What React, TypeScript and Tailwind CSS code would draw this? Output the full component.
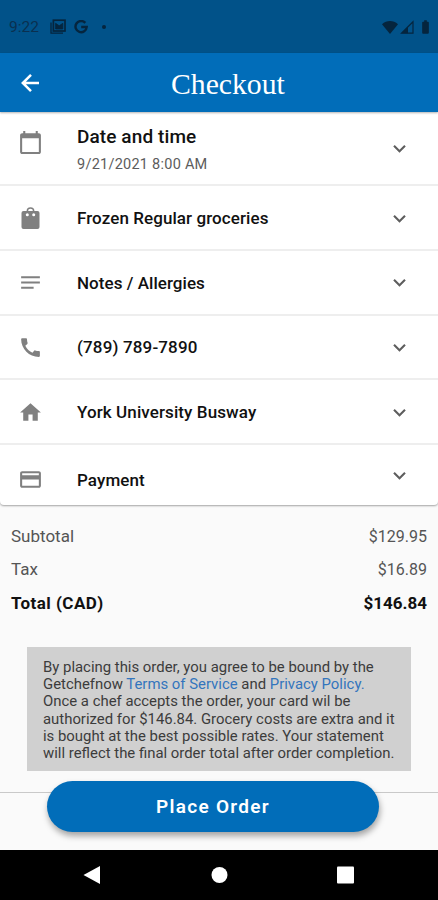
import {
    MdBatteryFull, MdCalendarToday, MdCall, MdExpandMore,
    MdHome, MdNotes, MdOutlineCreditCard,
} from "react-icons/md";

const sections = [
    { icon: MdNotes, name: "Notes / Allergies", spacing: "tracking-[0.05px]" },
    { icon: MdCall, name: "(789) 789-7890", spacing: "tracking-[0.15px]" },
    { icon: MdHome, name: "York University Busway", spacing: "tracking-[0.1px]" },
];

function StatusBar() {
    return (
        <div className="flex h-[53px] items-center bg-[#015289] pt-px pr-[7px] pl-[9px] text-[#05253e]">
            <span className="w-[41px] pt-px text-[15.5px] text-[#0a3050]">9:22</span>
            <svg width="16" height="16" viewBox="0 0 16 16" fill="none" stroke="currentColor">
                <path d="M1 3.5v10.7h12" strokeWidth="1.3" />
                <rect x="3.4" y="1.2" width="11.6" height="10.8" strokeWidth="1.7" />
                <path d="M5.6 10V4.3l3.6 2.5 3.6-2.5V10z" fill="currentColor" strokeWidth="0.8" />
            </svg>
            <svg className="ml-2" width="14" height="14" viewBox="0 0 14 14" fill="none" stroke="currentColor" strokeWidth="2.4">
                <path d="M11.3 2.9A5.6 5.6 0 1 0 12.7 7H7.2" />
            </svg>
            <span className="ml-[14px] size-1 rounded-full bg-current" />
            <svg className="ml-auto" width="16" height="13" viewBox="0 0 16 13" fill="currentColor">
                <path d="M0 3.2C4.6-1 11.4-1 16 3.2L8 13z" />
            </svg>
            <svg className="ml-[2px]" width="14" height="14" viewBox="0 0 14 14" fill="none" stroke="currentColor">
                <path d="M1.5 13.2 13 1.8v11.4z" strokeWidth="1.2" />
                <path d="M1.5 13.2 8 6.7v6.5z" fill="currentColor" stroke="none" />
            </svg>
            <MdBatteryFull className="ml-[3px] h-4 w-[17px] -mr-[3px]" />
        </div>
    );
}

function BagIcon() {
    return (
        <svg className="size-[25px] text-[#808080]" viewBox="0 0 25 25" fill="currentColor">
            <path d="M9.3 6V5.2a3.2 3.2 0 0 1 6.400 0V6" fill="none" stroke="currentColor" strokeWidth="1.500" />
            <rect x="3.500" y="5" width="18" height="18" rx="2" />
            <circle cx="9.300" cy="8.800" r="1.500" fill="white" />
            <circle cx="15.700" cy="8.800" r="1.500" fill="white" />
        </svg>
    );
}

export default function App() {
    return (
        <div className="flex h-[900px] w-[438px] flex-col overflow-hidden bg-[#fafafa] font-[Roboto,sans-serif] text-[#111]">
            <StatusBar />
            <header className="relative z-10 flex h-[59px] items-center bg-[#016db9] text-white shadow-[0_1px_2px_rgba(0,0,0,0.3)]">
                <svg className="ml-[17px] size-[26px]" viewBox="0 0 26 26" fill="none" stroke="currentColor" strokeWidth="2.500">
                    <path d="M22 13H6M14 4.800 5.800 13l8.200 8.200" />
                </svg>
                <h1 className="ml-[128px] pt-0.5 font-['Liberation_Serif',serif] text-[29.7px] leading-8">Checkout</h1>
            </header>

            <main className="overflow-hidden rounded-b bg-white shadow-[0_1px_2px_rgba(0,0,0,0.35)]">
                <div className="flex h-[74px] border-b-2 border-[#eeeeee] pr-[26px] pl-[18px]">
                    <MdCalendarToday className="mt-[18px] size-[25px] text-[#808080]" />
                    <div className="ml-[34px] flex-1 pt-[13px]">
                        <div className="text-[19px] leading-6 font-medium tracking-[0.1px]">Date and time</div>
                        <div className="mt-[6px] text-[14.5px] leading-5 tracking-[0.25px] text-[#5c5c5c]">9/21/2021 8:00 AM</div>
                    </div>
                    <MdExpandMore className="mt-6 size-[25px] text-[#5f5f5f]" />
                </div>
                <div className="flex h-[65px] items-center border-b-2 border-[#eeeeee] pt-px pr-[26px] pl-[18px]">
                    <BagIcon />
                    <div className="ml-[34px] flex-1 pt-px text-[17px] font-medium tracking-[0.08px]">Frozen Regular groceries</div>
                    <MdExpandMore className="size-[25px] text-[#5f5f5f]" />
                </div>
                {sections.map(item => (
                    <div key={item.name} className="flex h-[64.7px] items-center border-b-2 border-[#eeeeee] pt-px pr-[26px] pl-[18px]">
                        <item.icon className="size-[25px] text-[#808080]" />
                        <div className={`ml-[34px] flex-1 pt-px text-[17px] font-medium ${item.spacing}`}>{item.name}</div>
                        <MdExpandMore className="size-[25px] text-[#5f5f5f]" />
                    </div>
                ))}
                <div className="flex h-[60px] items-center pt-1 pr-[26px] pl-[18px]">
                    <MdOutlineCreditCard className="mt-[5px] size-[25px] text-[#808080]" />
                    <div className="ml-[34px] flex-1 pt-[7px] text-[17px] font-medium tracking-[0.1px]">Payment</div>
                    <MdExpandMore className="-mt-1 size-[25px] text-[#5f5f5f]" />
                </div>
            </main>

            <section className="flex flex-col pt-[15px] pr-[11px] pl-[11px] text-[17px] leading-[33.4px]">
                <div className="flex justify-between text-[#555]"><span>Subtotal</span><span className="text-base leading-[33.4px]">$129.95</span></div>
                <div className="flex justify-between text-[#555]"><span>Tax</span><span className="text-base leading-[33.4px]">$16.89</span></div>
                <div className="flex justify-between font-bold"><span className="tracking-[0.45px]">Total (CAD)</span><span>$146.84</span></div>
            </section>

            <p className="mt-[27px] ml-[27px] h-[124px] w-[384px] shrink-0 bg-[#d0d0d0] pt-3 pl-4 text-[14.9px] leading-[17.1px] whitespace-nowrap text-[#3c3c3c]">
                By placing this order, you agree to be bound by the<br />
                Getchefnow <a className="text-[#3375bd]">Terms of Service</a> and <a className="text-[#3375bd]">Privacy Policy.</a><br />
                Once a chef accepts the order, your card wil be<br />
                authorized for $146.84. Grocery costs are extra and it<br />
                is bought at the best possible rates. Your statement<br />
                will reflect the final order total after order completion.
            </p>

            <footer className="mt-auto">
                <div className="h-[58px] border-t border-[#c9c9c9] bg-[#fafafa]">
                    <button className="-mt-[12px] ml-[47px] block h-[51px] w-[332px] rounded-full bg-[#016db9] pt-0.5 text-[19px] font-semibold tracking-[1.3px] text-white shadow-[1px_4px_6px_rgba(0,0,0,0.35)]">
                        Place Order
                    </button>
                </div>
                <nav className="h-[50px] bg-black">
                    <svg width="438" height="50" viewBox="0 0 438 50" fill="white">
                        <path d="M83.5 25 100 16v18z" />
                        <circle cx="219.500" cy="25" r="8" />
                        <rect x="337" y="16.500" width="17" height="17" rx="1" />
                    </svg>
                </nav>
            </footer>
        </div>
    );
}
